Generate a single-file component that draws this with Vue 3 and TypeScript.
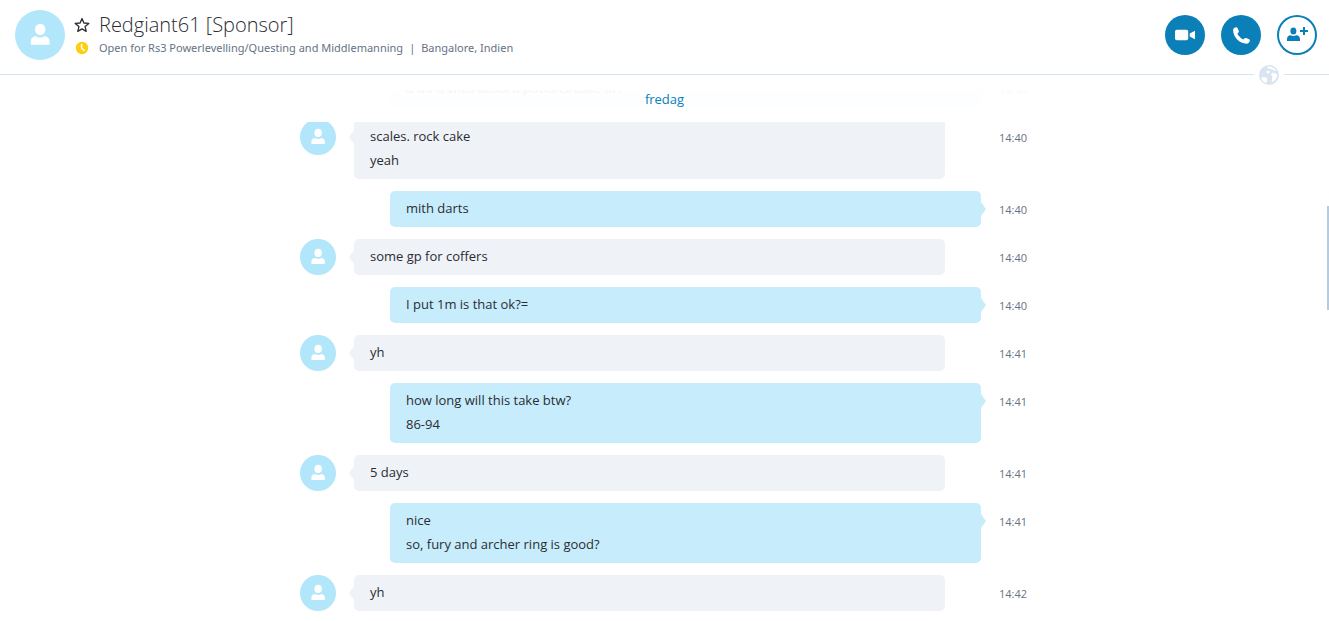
<script setup lang="ts">
interface Message {
  id: number
  own: boolean
  lines: string[]
  time: string
}

const contact = {
  name: 'Redgiant61 [Sponsor]',
  mood: 'Open for Rs3 Powerlevelling/Questing and Middlemanning',
  place: 'Bangalore, Indien',
}

const messages: Message[] = [
  { id: 1, own: true, lines: ['u do it with absorb potions/cake or?'], time: '14:40' },
  { id: 2, own: false, lines: ['scales. rock cake', 'yeah'], time: '14:40' },
  { id: 3, own: true, lines: ['mith darts'], time: '14:40' },
  { id: 4, own: false, lines: ['some gp for coffers'], time: '14:40' },
  { id: 5, own: true, lines: ['I put 1m is that ok?='], time: '14:40' },
  { id: 6, own: false, lines: ['yh'], time: '14:41' },
  { id: 7, own: true, lines: ['how long will this take btw?', '86-94'], time: '14:41' },
  { id: 8, own: false, lines: ['5 days'], time: '14:41' },
  { id: 9, own: true, lines: ['nice', 'so, fury and archer ring is good?'], time: '14:41' },
  { id: 10, own: false, lines: ['yh'], time: '14:42' },
]
</script>

<template>
  <div class="chat">
    <header class="topbar">
      <svg class="avatar avatar-large" viewBox="0 0 50 50" aria-hidden="true">
        <circle cx="25" cy="25" r="25" fill="#b1e6fb" />
        <ellipse cx="25.2" cy="19.4" rx="5.2" ry="5.7" fill="#fff" />
        <path d="M15.8 34.8v-3.2c0-3.400 2.200-5.200 5.200-5.300 1.200.9 2.700 1.300 4.200 1.300s3-.4 4.200-1.300c3 .1 5.200 1.900 5.200 5.300v3.200z" fill="#fff" />
      </svg>
      <div class="identity">
        <div class="line">
          <button class="star" type="button" aria-label="Favourite">
            <svg viewBox="0 0 16 16" width="16" height="16">
              <path d="M8 1.500 9.900 6l4.900.4-3.700 3.200 1.100 4.800L8 11.900l-4.200 2.500 1.100-4.800L1.200 6.400 6.100 6z" fill="none" stroke="#2b2c33" stroke-width="1.300" stroke-linejoin="round" />
            </svg>
          </button>
          <h1 class="name">{{ contact.name }}</h1>
        </div>
        <div class="line status">
          <svg class="presence" viewBox="0 0 16 16" width="16" height="16" aria-label="Away">
            <circle cx="8" cy="8" r="6.200" fill="#ffcd12" />
            <path d="M7.600 4.500v3.800l2.600 2" fill="none" stroke="#fff" stroke-width="1.500" stroke-linecap="round" stroke-linejoin="round" />
          </svg>
          <span>{{ contact.mood }}</span>
          <span class="divider">|</span>
          <span>{{ contact.place }}</span>
        </div>
      </div>
      <nav class="actions">
        <button class="action" type="button" aria-label="Video call">
          <svg viewBox="0 0 40 40">
            <rect x="10" y="14.800" width="13.200" height="10.400" rx="1.800" fill="#fff" />
            <path d="M24.700 18.400 30 15.700v8.600l-5.300-2.700z" fill="#fff" />
          </svg>
        </button>
        <button class="action" type="button" aria-label="Call">
          <svg viewBox="0 0 40 40">
            <path d="M12.100 15.100c.1-1.600 1.300-2.600 2.900-2.900.7-.1 1.200.1 1.500.7l1.300 3c.3.6.1 1.100-.3 1.500l-1.100 1.200c.7 2 3.700 5 5.900 5.900l1.300-1.200c.4-.4.9-.5 1.500-.3l3 1.300c.6.3.8.8.7 1.500-.3 1.600-1.500 2.900-3.200 2.900-7.100-.1-13.400-6.400-13.500-13.600z" fill="#fff" />
          </svg>
        </button>
        <button class="action outlined" type="button" aria-label="Add people">
          <svg viewBox="0 0 40 40">
            <g fill="#0a7fb8">
              <ellipse cx="16.400" cy="16" rx="3" ry="3.500" />
              <path d="M10 26v-2c0-2.400 1.500-3.700 3.500-3.800.9.500 1.900.8 2.900.8s2-.3 2.900-.8c2 .1 3.700 1.400 3.700 3.800v2z" />
              <path d="M26 12h2v3.100h3v2h-3V20h-2v-2.900h-3v-2h3z" />
            </g>
          </svg>
        </button>
      </nav>
      <span class="globe">
        <svg viewBox="0 0 20 20" width="20" height="20" aria-hidden="true">
          <circle cx="10" cy="10" r="10" fill="#d8e5f0" />
          <path d="M7.500 1.900c1 .2 1.200 1.500 2.400 1.600 1.300.2 1.600 1 2.700.8 1.200-.2 1.400 1.200 2.600 1.100.9 0 1.500.5 2.400.6C16 2.700 11.800.8 7.500 1.900z" fill="#fff" />
          <path d="M13.200 8c-1.500.4-1.400 1.900-.4 2.700.9.700.6 1.500.4 2.500-.2 1.200-.7 2.800-.3 4.100 3.300-1.300 5.600-4.400 5.400-8.200-.9.400-1.300-.6-2.200-.9-.9-.3-2-.5-2.900-.2z" fill="#fff" />
          <path d="M9.200 5.800c-1.400.1-2.200 1.200-1.600 2.200.6.9 2.300.6 2.900-.1.600-.8.100-2.200-1.300-2.100zM2.300 13.500c.9-1.400 2.700-1.700 4.300-1.100 1.500.6 2.100 1.800 1.600 3.300-.3 1-.5 2-1.300 2.200-2-.8-3.700-2.400-4.600-4.400z" fill="#fff" />
        </svg>
      </span>
    </header>

    <main class="conversation">
      <ul class="messages">
        <li v-for="message in messages" :key="message.id" class="row" :class="{ own: message.own }">
          <svg v-if="!message.own" class="avatar" viewBox="0 0 50 50" aria-hidden="true">
            <circle cx="25" cy="25" r="25" fill="#b1e6fb" />
            <ellipse cx="25.200" cy="19.400" rx="5.200" ry="5.700" fill="#fff" />
            <path d="M15.800 34.800v-3.200c0-3.400 2.200-5.200 5.200-5.300 1.200.9 2.700 1.300 4.200 1.300s3-.4 4.200-1.300c3 .1 5.200 1.900 5.200 5.300v3.200z" fill="#fff" />
          </svg>
          <div class="bubble">
            <p v-for="line in message.lines" :key="line">{{ line }}</p>
          </div>
          <time class="time">{{ message.time }}</time>
        </li>
      </ul>
      <div class="day">fredag</div>
      <span class="scroll-thumb"></span>
    </main>
  </div>
</template>

<style>
body {
  background: #fff;
}
</style>

<style scoped>
.chat {
  display: flex;
  flex-direction: column;
  height: 100vh;
  overflow: hidden;
  font-family: "Open Sans", "Noto Sans", sans-serif;
  color: #2b2c33;
}

.topbar {
  position: relative;
  display: flex;
  align-items: center;
  flex: none;
  box-sizing: border-box;
  height: 75px;
  padding: 0 12px 4px 15px;
  border-bottom: 1px solid #d8e5f0;
}

.avatar {
  flex: none;
  width: 36px;
  height: 36px;
}

.avatar-large {
  width: 50px;
  height: 50px;
}

.identity {
  flex: 1;
  min-width: 0;
  margin-left: 9px;
  padding-bottom: 2px;
}

.line {
  display: flex;
  align-items: center;
  white-space: nowrap;
}

.star {
  display: flex;
  margin: 0 9px 0 0;
  padding: 0;
  border: 0;
  background: none;
}

.name {
  margin: 0;
  font-size: 20px;
  font-weight: 300;
  line-height: 28px;
}

.status {
  color: #667284;
  font-family: "Noto Sans", "Open Sans", sans-serif;
  font-size: 11px;
  line-height: 18px;
}

.presence {
  margin-right: 9px;
}

.divider {
  margin: 0 6px;
}

.actions {
  display: flex;
  gap: 16px;
}

.action {
  display: flex;
  width: 40px;
  height: 40px;
  padding: 0;
  border: 0;
  border-radius: 50%;
  background: #0a7fb8;
}

.action svg {
  width: 40px;
  height: 40px;
}

.outlined {
  background: #fff;
  box-shadow: inset 0 0 0 2px #0a7fb8;
}

.globe {
  position: absolute;
  right: 45px;
  bottom: -11px;
  display: flex;
  padding: 0 5px;
  background: #fff;
}

.conversation {
  position: relative;
  flex: 1;
  display: flex;
  flex-direction: column;
  justify-content: flex-end;
  min-height: 0;
  margin-top: 15px;
  overflow: hidden;
}

.messages {
  display: flex;
  flex-direction: column;
  gap: 12px;
  box-sizing: border-box;
  width: 100%;
  max-width: 729px;
  margin: 0 auto;
  padding: 0 0 10px;
  list-style: none;
}

.row {
  display: flex;
  align-items: flex-start;
}

.bubble {
  position: relative;
  flex: 1;
  box-sizing: border-box;
  min-height: 36px;
  margin: 0 36px 0 18px;
  padding: 5px 16px 7px;
  border-radius: 5px;
  background: #eff2f7;
  font-size: 13px;
  line-height: 24px;
}

.bubble::before {
  content: "";
  position: absolute;
  top: 11px;
  left: -5px;
  width: 5px;
  height: 14px;
  background: inherit;
  clip-path: polygon(100% 0, 60% 20%, 0 50%, 60% 80%, 100% 100%);
}

.own .bubble {
  margin: 0 0 0 90px;
  background: #c7ecfc;
}

.own .bubble::before {
  right: -5px;
  left: auto;
  clip-path: polygon(0 0, 40% 20%, 100% 50%, 40% 80%, 0 100%);
}

.bubble p {
  margin: 0;
}

.time {
  flex: none;
  width: 30px;
  margin-left: 18px;
  color: #667284;
  font-size: 11px;
  line-height: 38px;
  height: 36px;
}

.day {
  position: absolute;
  top: 0;
  left: 0;
  right: 0;
  height: 32px;
  background: rgba(255, 255, 255, 0.95);
  color: #0a7fb8;
  font-size: 13px;
  line-height: 18px;
  text-align: center;
}

.scroll-thumb {
  position: absolute;
  top: 116px;
  right: 0;
  width: 2px;
  height: 104px;
  background: #b6cbdd;
}
</style>
